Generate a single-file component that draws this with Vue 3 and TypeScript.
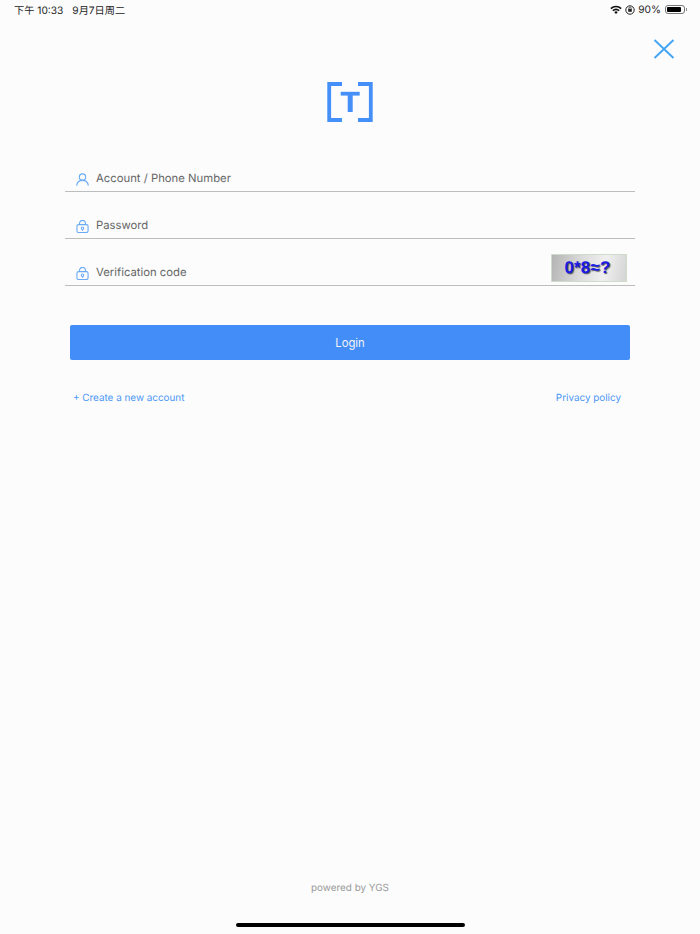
<script setup lang="ts">
interface Field { label: string; icon: 'user' | 'lock'; captcha?: boolean }
const fields: Field[] = [
  { label: 'Account / Phone Number', icon: 'user' },
  { label: 'Password', icon: 'lock' },
  { label: 'Verification code', icon: 'lock', captcha: true },
]
</script>

<template>
  <div class="page">
    <div class="status">
      <div class="status-left">
        <span>下午 10:33</span>
        <span>9月7日周二</span>
      </div>
      <div class="status-right">
        <svg width="12" height="9" viewBox="0 0 12 9" class="wifi">
          <path d="M0.3 3.1A8 8 0 0 1 11.7 3.1L10.6 4.3A6.4 6.4 0 0 0 1.4 4.3Z" fill="#111" />
          <path d="M2.3 5.2A5.1 5.1 0 0 1 9.7 5.2L8.6 6.3A3.5 3.5 0 0 0 3.4 6.3Z" fill="#111" />
          <path d="M4.3 7.2A2.4 2.4 0 0 1 7.7 7.2L6 9Z" fill="#111" />
        </svg>
        <svg width="10" height="10" viewBox="0 0 10 10" class="lockrot">
          <circle cx="5" cy="5" r="4.2" fill="none" stroke="#222" stroke-width="1" />
          <rect x="3.2" y="3.8" width="3.6" height="3" fill="#222" />
          <path d="M3.9 3.8V3A1.1 1.1 0 0 1 6.1 3V3.8" fill="none" stroke="#222" stroke-width=".7" />
        </svg>
        <span class="pct">90%</span>
        <div class="battery"><div class="battery-fill"></div></div>
        <div class="battery-cap"></div>
      </div>
    </div>

    <div class="close-row">
      <svg class="close" width="22" height="20" viewBox="0 0 22 20">
        <path d="M1.5 1 L20.5 19 M20.5 1 L1.5 19" stroke="#45a5f5" stroke-width="1.9" fill="none" />
      </svg>
    </div>

    <div class="logo-row">
      <svg width="46" height="40" viewBox="0 0 46 40">
        <path d="M15 2H2.2V38H15M31 2H43.8V38H31" stroke="#4590f8" stroke-width="3.8" fill="none" />
        <path d="M13.7 11.7H32.7" stroke="#4590f8" stroke-width="3.8" fill="none" />
        <path d="M23.2 11V30" stroke="#4590f8" stroke-width="5" fill="none" />
      </svg>
    </div>

    <form class="form" @submit.prevent>
      <div v-for="f in fields" :key="f.label" class="field">
        <svg v-if="f.icon === 'user'" class="ficon" width="13" height="13" viewBox="0 0 14 14">
          <circle cx="7" cy="4.3" r="3.4" fill="none" stroke="#6aabf7" stroke-width="1.2" />
          <path d="M.7 13.6C1.1 10.2 3.6 8 7 8S12.9 10.2 13.3 13.6" fill="none" stroke="#6aabf7" stroke-width="1.2" />
        </svg>
        <svg v-else class="ficon" width="13" height="13" viewBox="0 0 14 14">
          <rect x="1" y="5" width="12" height="8.5" rx="1.8" fill="none" stroke="#6aabf7" stroke-width="1.2" />
          <path d="M3.8 5V3.6A3.2 3.2 0 0 1 10.2 3.6V5" fill="none" stroke="#6aabf7" stroke-width="1.2" />
          <circle cx="7" cy="9" r="1.4" fill="none" stroke="#6aabf7" stroke-width="1.1" />
          <path d="M7 10.4V11.6" stroke="#6aabf7" stroke-width="1.1" />
        </svg>
        <span class="flabel">{{ f.label }}</span>
        <div v-if="f.captcha" class="captcha"><span>0*8≈?</span></div>
      </div>
    </form>

    <button class="login" type="button">Login</button>

    <div class="links">
      <a>+ Create a new account</a>
      <a>Privacy policy</a>
    </div>

    <div class="spacer"></div>
    <div class="powered">powered by YGS</div>
    <div class="home"></div>
  </div>
</template>

<style scoped>
.page {
  width: 700px;
  height: 934px;
  background: #fcfcfc;
  display: flex;
  flex-direction: column;
  font-family: Inter, "Noto Sans CJK SC", sans-serif;
  text-rendering: geometricPrecision;
  overflow: hidden;
}
.status {
  height: 19px;
  padding: 0 13px 0 14px;
  display: flex;
  justify-content: space-between;
  align-items: center;
  font-size: 10.2px;
  color: #222;
}
.status-left { display: flex; gap: 9px; }
.status-right { display: flex; align-items: center; }
.wifi { margin-right: 3px; }
.lockrot { margin-right: 3px; }
.pct { margin-right: 4px; }
.battery {
  width: 20px;
  height: 9px;
  border: 1px solid #777;
  border-radius: 3px;
  padding: 1px;
  box-sizing: border-box;
  display: flex;
}
.battery-fill { width: 90%; background: #000; border-radius: 1px; }
.battery-cap { width: 1px; height: 3px; background: #888; margin-left: 1px; }
.close-row {
  display: flex;
  justify-content: flex-end;
  padding: 20px 25px 0 0;
}
.close { display: block; }
.logo-row {
  display: flex;
  justify-content: center;
  margin-top: 23px;
}
.form {
  margin: 23px 65px 0;
  display: flex;
  flex-direction: column;
}
.field {
  height: 47px;
  box-sizing: border-box;
  border-bottom: 1px solid #bdbdbd;
  display: flex;
  align-items: flex-end;
  padding: 0 8px 5px 11px;
  position: relative;
}
.ficon { margin-right: 7px; flex: none; }
.flabel {
  font-size: 11.3px;
  color: #666;
  line-height: 14px;
  margin-bottom: 1px;
  flex: 1;
}
.captcha {
  width: 76px;
  height: 28px;
  box-sizing: border-box;
  border: 1px solid #cfdccb;
  background: linear-gradient(100deg, #b4b4b4 0%, #dcdcdc 40%, #f0f0f0 70%, #d4d4d4 100%);
  display: flex;
  align-items: center;
  justify-content: center;
  margin-bottom: -2px;
}
.captcha span {
  font-family: "Liberation Sans", sans-serif;
  font-weight: 700;
  font-size: 17px;
  letter-spacing: .2px;
  color: #1a1ae6;
  text-shadow: 1px 1px 1px #555;
  margin-right: 3px;
}
.login {
  margin: 39px 70px 0;
  height: 35px;
  background: #428df8;
  border: none;
  border-radius: 2px;
  color: #f4f4f4;
  font-family: inherit;
  font-size: 11.3px;
  padding: 0;
}
.links {
  margin: 31px 79px 0 73px;
  display: flex;
  justify-content: space-between;
  font-size: 9.9px;
  line-height: 14px;
  color: #4a97f5;
}
.spacer { flex: 1; }
.powered {
  text-align: center;
  font-size: 9.9px;
  line-height: 14px;
  color: #999;
}
.home {
  width: 229px;
  height: 4px;
  border-radius: 2px;
  background: #000;
  margin: 28px auto 7px;
}
</style>
